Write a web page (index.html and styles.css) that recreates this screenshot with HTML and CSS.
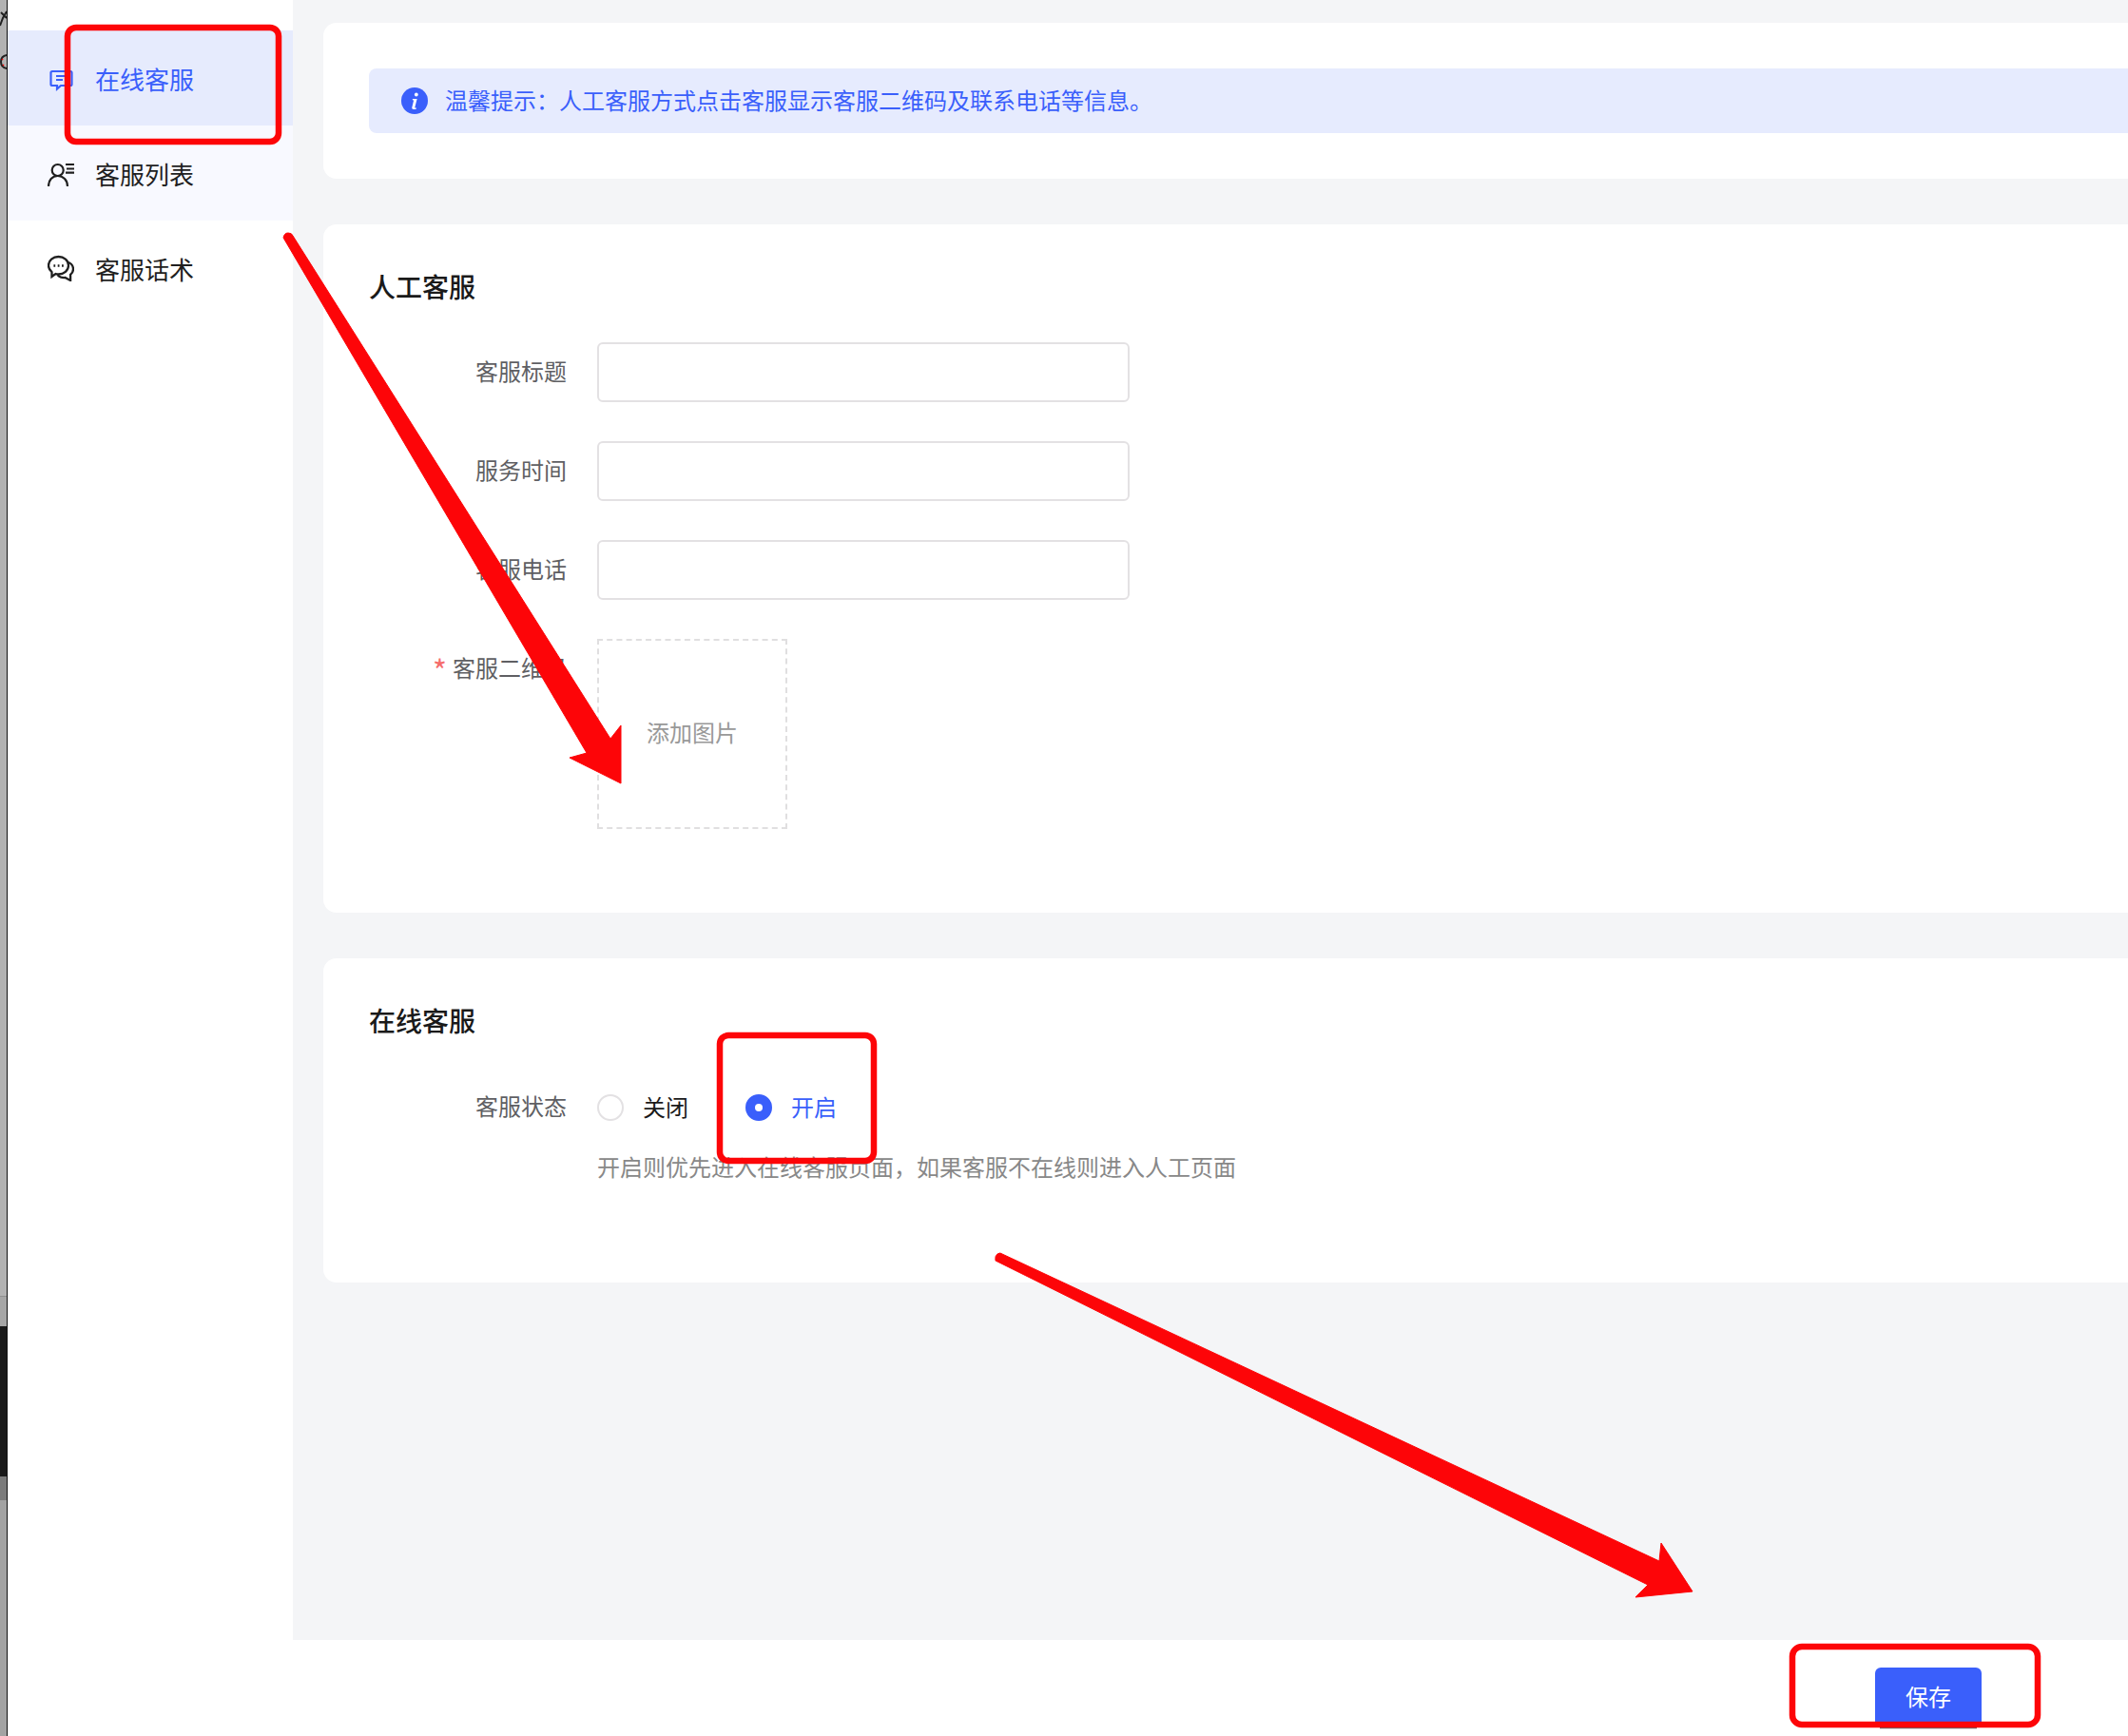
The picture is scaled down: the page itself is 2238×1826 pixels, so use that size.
FILE: index.html
```html
<!DOCTYPE html>
<html lang="zh-CN">
<head>
<meta charset="utf-8">
<title>在线客服</title>
<link rel="stylesheet" href="styles.css">
</head>
<body>
<div class="page">
  <div class="strip">
    <svg class="strip-glyphs" width="7" height="80" viewBox="0 0 7 80" fill="none">
      <path d="M1 13l6 6M7 12l-4 7-3 8" stroke="#222" stroke-width="2"/>
      <path d="M7 58q-6 1-6 7t6 7" stroke="#222" stroke-width="2"/>
      <path d="M2 62l1 1M3 68l1 1" stroke="#f00" stroke-width="1.500"/>
    </svg>
    <div class="seg seg-a"></div>
    <div class="seg seg-b"></div>
    <div class="seg seg-c"></div>
    <div class="seg seg-d"></div>
    <div class="seg seg-e"></div>
  </div>
  <div class="content">
    <div class="upper">
      <nav class="side">
        <div class="nav-item active">
          <svg class="nav-icon" viewBox="0 0 28 28" fill="none" stroke="currentColor" stroke-width="2.200">
            <path d="M5 7h19a1.500 1.500 0 0 1 1.500 1.500v12a1.500 1.500 0 0 1-1.500 1.500h-10l-4 3.500v-3.500h-5a1.500 1.500 0 0 1-1.500-1.500v-12a1.500 1.500 0 0 1 1.500-1.500z"/>
            <path d="M9 12h11M9 16h7"/>
          </svg>
          <span>在线客服</span>
        </div>
        <div class="nav-item hover">
          <svg class="nav-icon" viewBox="0 0 28 28" fill="none" stroke="#1f1f1f" stroke-width="2.200">
            <circle cx="10.700" cy="11" r="6"/>
            <path d="M1 28c0-6.500 4-11 9.700-11S21 21.500 21 28"/>
            <path d="M19 5h9M20 9.500h8M19 13.700h9"/>
          </svg>
          <span>客服列表</span>
        </div>
        <div class="nav-item">
          <svg class="nav-icon" viewBox="0 0 28 28" fill="none" stroke="#1f1f1f" stroke-width="2.300">
            <path d="M11.500 2c5.800 0 10.500 4.100 10.500 9.300s-4.700 9.200-10.500 9.200c-1 0-2.100-.1-3-.4L4.500 23v-4.800C2.300 16.400 1 14 1 11.300 1 6.100 5.700 2 11.500 2z"/>
            <path d="M21 7.500c3.700 1.300 6 4.200 6 7.600 0 2.300-1.100 4.300-2.900 5.800V27l-5.600-3c-3 .3-6-.8-8-2.800"/>
            <path d="M6.400 11.500h1.800M10.700 11.500h1.800M15 11.500h1.800"/>
          </svg>
          <span>客服话术</span>
        </div>
      </nav>
      <main class="main">
        <section class="card card-tip">
          <div class="alert">
            <svg class="alert-icon" viewBox="0 0 28 28">
              <circle cx="14" cy="14" r="14" fill="#3a5ffb"/>
              <circle cx="15.800" cy="7.500" r="1.900" fill="#fff"/>
              <path d="M12 12h4.600l-2.300 9c-.1.500.2.700 1.700.4l-.2 1c-2.300.8-5 .9-4.500-1.300l1.700-7.100c.1-.6-.4-.9-1.300-.8z" fill="#fff"/>
            </svg>
            <span class="alert-text">温馨提示&#xFF1A;人工客服方式点击客服显示客服二维码及联系电话等信息。</span>
          </div>
        </section>
        <section class="card card-manual">
          <h2 class="card-title">人工客服</h2>
          <div class="form">
            <div class="row">
              <label class="label">客服标题</label>
              <input class="input" type="text">
            </div>
            <div class="row">
              <label class="label">服务时间</label>
              <input class="input" type="text">
            </div>
            <div class="row">
              <label class="label">客服电话</label>
              <input class="input" type="text">
            </div>
            <div class="row">
              <label class="label"><i class="req">*</i>客服二维码</label>
              <div class="upload">添加图片</div>
            </div>
          </div>
        </section>
        <section class="card card-online">
          <h2 class="card-title">在线客服</h2>
          <div class="row row-radio">
            <label class="label">客服状态</label>
            <div class="radios">
              <div class="radio"><span class="dot"></span><span class="radio-text">关闭</span></div>
              <div class="radio on"><span class="dot"></span><span class="radio-text">开启</span></div>
            </div>
          </div>
          <p class="hint">开启则优先进入在线客服页面&#xFF0C;如果客服不在线则进入人工页面</p>
        </section>
      </main>
    </div>
    <footer class="foot">
      <button class="save" type="button">保存</button>
    </footer>
  </div>
</div>
<svg class="marks" width="2238" height="1826" viewBox="0 0 2238 1826" fill="none">
  <path d="M1977 1817.500h102" stroke="#666" stroke-width="1.500"/>
  <g stroke="#fd0508" stroke-width="6.500">
    <rect x="71" y="29" width="222" height="120" rx="9"/>
    <rect x="757" y="1089" width="162" height="132" rx="9"/>
    <rect x="1885" y="1732" width="258" height="82" rx="10"/>
  </g>
  <g fill="#fd0508" stroke="#fd0508" stroke-width="1" stroke-linejoin="round">
    <path d="M298 250q1-5 5-5t5 3L642 777l11-14v61l-54-27 18-5z"/>
    <path d="M1047 1326q-1-5 2-7t5 0L1745 1642l2-19 33 51-60 6 13-13z"/>
  </g>
</svg>
</body>
</html>
```
FILE: styles.css
```css
* { box-sizing: border-box; }
html, body { margin: 0; padding: 0; background: #fff; }
body {
  position: relative;
  width: 2238px;
  height: 1826px;
  overflow: hidden;
  font-family: "Noto Sans CJK SC", "Noto Sans", sans-serif;
  font-size: 24px;
  color: #1f1f1f;
}
.page { display: flex; height: 1826px; }

.strip {
  position: relative;
  flex: 0 0 8px;
  display: flex;
  flex-direction: column;
  border-right: 1px solid #111;
}
.strip-glyphs { position: absolute; top: 0; left: 0; }
.seg-a { height: 1363px; background: #b2b2b2; }
.seg-b { height: 32px; background: #a6a6a6; border-top: 1px solid #8f8f8f; }
.seg-c { height: 158px; background: #1a1a1a; }
.seg-d { height: 25px; background: #7b7b7b; }
.seg-e { flex: 1; background: #a3a3a3; }

.content { flex: 1; display: flex; flex-direction: column; min-width: 0; }
.upper { display: flex; height: 1725px; }

.side { flex: 0 0 300px; padding-top: 32px; background: #fff; }
.nav-item {
  display: flex;
  align-items: center;
  height: 100px;
  padding-left: 42px;
  font-size: 26px;
  gap: 22px;
  color: #1f1f1f;
}
.nav-item.active { background: #e6ebfd; color: #3a5ffb; }
.nav-item.hover { background: #f8f9ff; }
.nav-icon { width: 28px; height: 28px; flex: none; }

.main {
  flex: 1;
  min-width: 0;
  overflow: hidden;
  background: #f4f5f7;
  padding: 24px 0 0 32px;
  display: flex;
  flex-direction: column;
  gap: 48px;
}
.card {
  width: 2000px;
  background: #fff;
  border-radius: 14px;
  padding-left: 48px;
}
.card-tip { height: 164px; padding-top: 48px; }
.card-manual { height: 724px; padding-top: 45px; }
.card-online { height: 341px; padding-top: 45px; }
.card-title { margin: 0; font-size: 28px; line-height: 40px; font-weight: 500; color: #1a1a1a; }

.alert {
  display: flex;
  align-items: center;
  height: 68px;
  padding-left: 34px;
  gap: 18px;
  border-radius: 8px;
  background: #e6ebfe;
  color: #3a5ffb;
}
.alert-icon { width: 28px; height: 28px; flex: none; }
.alert-text { margin-top: -4px; }

.form { display: flex; flex-direction: column; gap: 41px; margin-top: 39px; }
.row { display: flex; align-items: flex-start; gap: 32px; }
.row-radio { margin-top: 40px; }
.label {
  flex: 0 0 208px;
  height: 63px;
  text-align: right;
  line-height: 60px;
  color: #5f5f63;
}
.req {
  font-style: normal;
  font-size: 32px;
  line-height: 1;
  vertical-align: -6px;
  color: #f56c6c;
  margin-right: 6px;
}
.input {
  display: block;
  width: 560px;
  height: 63px;
  padding: 0 16px;
  border: 2px solid #e3e1e3;
  border-radius: 6px;
  background: #fff;
  outline: none;
  font: inherit;
}
.upload {
  display: flex;
  align-items: center;
  justify-content: center;
  width: 200px;
  height: 200px;
  padding-bottom: 5px;
  border: 2px dashed #e0dfe0;
  color: #999;
}

.radios { display: flex; gap: 60px; height: 63px; align-items: center; }
.radio { display: flex; align-items: center; gap: 20px; color: #1a1a1a; }
.radio-text { margin-top: -2px; }
.dot {
  position: relative;
  width: 28px;
  height: 28px;
  border-radius: 50%;
  border: 2px solid #e3e1e3;
  background: #fff;
}
.radio.on { color: #3a5ffb; }
.radio.on .dot { background: #3a5ffb; border-color: #3a5ffb; }
.radio.on .dot::after {
  content: "";
  position: absolute;
  top: 8px;
  left: 8px;
  width: 8px;
  height: 8px;
  border-radius: 50%;
  background: #fff;
}
.hint { margin: 14px 0 0 240px; line-height: 34px; color: #888; }

.foot {
  flex: 1;
  display: flex;
  justify-content: flex-end;
  align-items: flex-start;
  padding: 29px 154px 0 0;
  background: #fff;
}
.save {
  width: 112px;
  height: 60px;
  padding: 0 0 2px;
  border: 0;
  border-radius: 6px 6px 0 0;
  background: #3a5ffb;
  color: #fff;
  font: inherit;
}

.marks { position: absolute; top: 0; left: 0; pointer-events: none; }
```
